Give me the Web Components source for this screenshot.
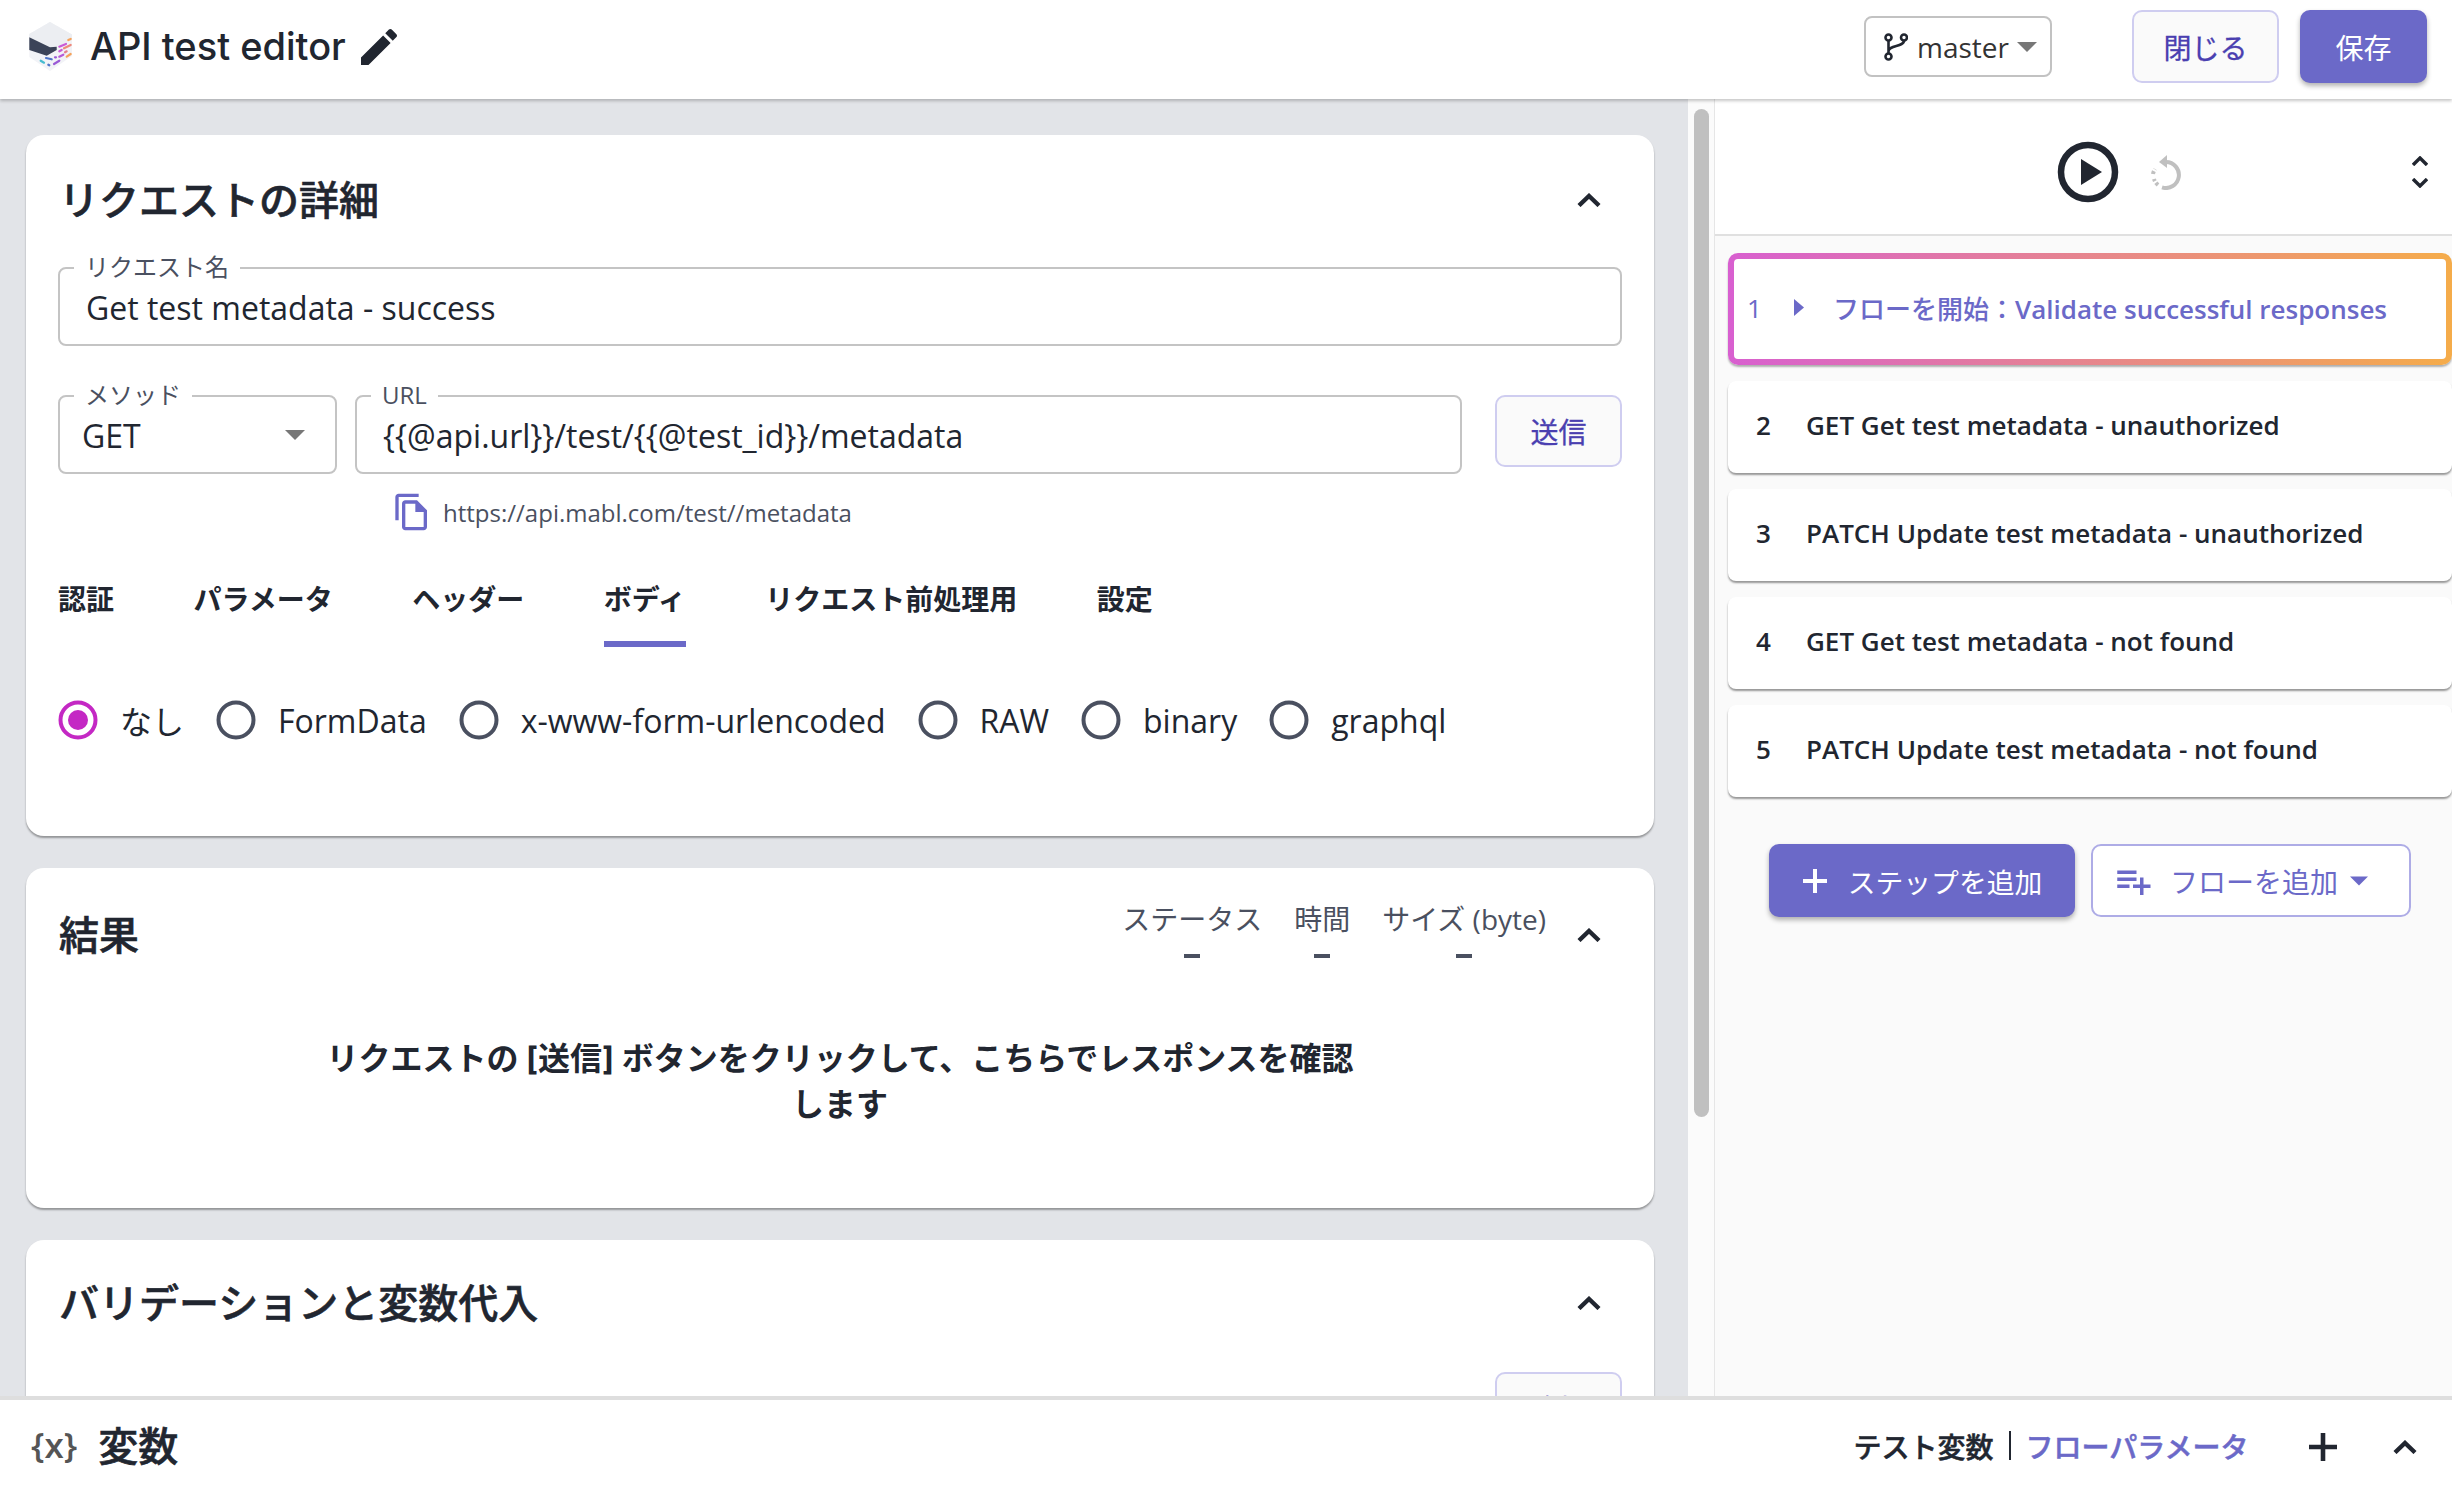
<!DOCTYPE html>
<html lang="ja">
<head>
<meta charset="utf-8">
<title>API test editor</title>
<style>
  html, body { margin: 0; height: 100%; overflow: hidden; }
  body {
    font-family: "Open Sans", "Noto Sans CJK JP", sans-serif;
    color: #212630;
    background: #e2e4e8;
  }
</style>
</head>
<body>
<app-shell>
  <app-header slot="header"></app-header>

  <section-card slot="left" heading="リクエストの詳細" head="132">
    <outlined-field label="リクエスト名" pad="26">Get test metadata - success</outlined-field>
    <form-row>
      <outlined-field label="メソッド" pad="22" caret style="width:279px">GET</outlined-field>
      <outlined-field label="URL" pad="26" style="flex:1">{{@api.url}}/test/{{@test_id}}/metadata</outlined-field>
      <ui-button kind="ghost" style="width:127px;height:72px;margin-left:15px">送信</ui-button>
    </form-row>
    <url-hint>https://api.mabl.com/test//metadata</url-hint>
    <tab-bar>
      <tab-item>認証</tab-item>
      <tab-item>パラメータ</tab-item>
      <tab-item>ヘッダー</tab-item>
      <tab-item active>ボディ</tab-item>
      <tab-item>リクエスト前処理用</tab-item>
      <tab-item>設定</tab-item>
    </tab-bar>
    <radio-group>
      <radio-option checked>なし</radio-option>
      <radio-option>FormData</radio-option>
      <radio-option>x-www-form-urlencoded</radio-option>
      <radio-option>RAW</radio-option>
      <radio-option>binary</radio-option>
      <radio-option>graphql</radio-option>
    </radio-group>
  </section-card>

  <section-card slot="left" heading="結果" head="136">
    <result-stat slot="meta" label="ステータス"></result-stat>
    <result-stat slot="meta" label="時間"></result-stat>
    <result-stat slot="meta" label="サイズ (byte)"></result-stat>
    <empty-note>リクエストの [送信] ボタンをクリックして、こちらでレスポンスを確認<br>します</empty-note>
  </section-card>

  <section-card slot="left" heading="バリデーションと変数代入" head="128">
    <div style="display:flex;justify-content:flex-end">
      <ui-button kind="ghost" style="width:127px;height:72px;margin-top:4px">追加</ui-button>
    </div>
  </section-card>

  <run-toolbar slot="right-top"></run-toolbar>

  <step-row slot="right" num="1" active><span style="font-weight:500">フローを開始：</span>Validate successful responses</step-row>
  <step-row slot="right" num="2">GET Get test metadata - unauthorized</step-row>
  <step-row slot="right" num="3">PATCH Update test metadata - unauthorized</step-row>
  <step-row slot="right" num="4">GET Get test metadata - not found</step-row>
  <step-row slot="right" num="5">PATCH Update test metadata - not found</step-row>
  <step-actions slot="right"></step-actions>

  <variables-bar slot="footer"></variables-bar>
</app-shell>

<script>
  const CHEVRON = `<svg width="24" height="14" viewBox="0 0 24 14" fill="none" stroke="#212630" stroke-width="4.4"><path d="M2 12.5 12 3l10 9.5"/></svg>`;
  const CARET = (c) => `<svg width="20" height="10" viewBox="0 0 20 10" fill="${c}"><path d="M0 0h20L10 10z"/></svg>`;

  class BaseElement extends HTMLElement {
    connectedCallback() {
      // Create a shadow root
      const shadow = this.attachShadow({ mode: "open" });
      shadow.innerHTML = this.render();
    }
  }

  class AppShell extends BaseElement {
    render() {
      return `
        <style>
          :host { display: flex; flex-direction: column; height: 100vh; overflow: hidden; }
          .main { flex: 1; min-height: 0; display: flex; overflow: hidden; }
          .left {
            width: 1688px; flex: none; box-sizing: border-box; overflow: hidden;
            padding: 36px 34px 0 26px; display: flex; flex-direction: column; gap: 32px;
          }
          .track { width: 27px; flex: none; box-sizing: border-box; padding: 10px 5px 0 6px; background: #fbfbfb; border-right: 1px solid #e6e6e6; }
          .thumb { height: 1008px; background: #c0c0c0; border-radius: 8px; }
          .right { flex: 1; min-width: 0; display: flex; flex-direction: column; background: #fafafa; }
          .steps { padding: 17px 0 0 13px; display: flex; flex-direction: column; gap: 16px; }
        </style>
        <slot name="header"></slot>
        <div class="main">
          <div class="left"><slot name="left"></slot></div>
          <div class="track"><div class="thumb"></div></div>
          <div class="right">
            <slot name="right-top"></slot>
            <div class="steps"><slot name="right"></slot></div>
          </div>
        </div>
        <slot name="footer"></slot>
      `;
    }
  }

  class AppHeader extends BaseElement {
    render() {
      return `
        <style>
          :host {
            display: flex; align-items: center; height: 99px; flex: none; box-sizing: border-box;
            background: #fff; box-shadow: 0 2px 3px rgba(0,0,0,.22); position: relative; z-index: 2;
            padding: 0 25px 6px 29px;
          }
          .title { font: 500 38px Inter, "Open Sans", sans-serif; color: #212630; margin: 0 0 2px 17px; }
          .edit { margin-left: 9px; }
          .spacer { flex: 1; }
          branch-select { margin-right: 80px; }
          ui-button { width: 147px; height: 73px; }
          ui-button[kind=primary] { width: 127px; margin-left: 21px; }
        </style>
        <svg width="44" height="49" viewBox="0 0 44 49" fill="none">
          <path d="M21 0 43 12.500V34L21 49 .3 35V12z" fill="#f2f3f7"/>
          <path d="M21 0 43 12.500V18L27.700 24.700 21 25.300.3 15.300V12z" fill="#eceef2"/>
          <path d="M.3 15.300 21 25.300l6.700-.6V28L17.700 33.700.3 28z" fill="#3b4358"/>
          <g stroke-width="2.2" stroke-linecap="round">
            <path d="M30.300 24.700 37 22" stroke="#c95ad6"/>
            <path d="M39.300 18l2.400-1" stroke="#f5a35c"/>
            <path d="M30.300 29.300l2.400-1.300" stroke="#c95ad6"/>
            <path d="M35 26.300 41.700 23" stroke="#ee8a7c"/>
            <path d="M30.300 34.700l4-2" stroke="#b45ad6"/>
            <path d="M36 30.300l1.700-1" stroke="#e4808e"/>
            <path d="M37.700 34.700l4-2.700" stroke="#f5a35c"/>
            <path d="M25 42l5.300-3.300" stroke="#9a5ad6"/>
            <path d="M26 35.300h1" stroke="#9a5ad6"/>
            <path d="M17 36l5.700 1.300" stroke="#4f74c8"/>
            <path d="M11.700 38.700 15 40.700" stroke="#45bcd0"/>
            <path d="M19.300 42.700l1 .6" stroke="#4f74c8"/>
          </g>
        </svg>
        <span class="title">API test editor</span>
        <svg class="edit" width="48" height="48" viewBox="0 0 24 24" fill="#212630"><path d="M3 17.250V21h3.750L17.810 9.940l-3.750-3.750L3 17.250zM20.710 7.040c.39-.39.39-1.020 0-1.410l-2.340-2.340c-.39-.39-1.020-.39-1.410 0l-1.830 1.830 3.750 3.750 1.830-1.830z"/></svg>
        <span class="spacer"></span>
        <branch-select>master</branch-select>
        <ui-button kind="ghost">閉じる</ui-button>
        <ui-button kind="primary">保存</ui-button>
      `;
    }
  }

  class BranchSelect extends BaseElement {
    render() {
      return `
        <style>
          :host {
            display: inline-flex; align-items: center; box-sizing: border-box; width: 188px; height: 61px;
            border: 2px solid #c2c2c2; border-radius: 8px; padding-left: 18px; font-size: 28px; color: #333;
          }
          .name { margin: 0 8px 0 9px; line-height: 1; }
        </style>
        <svg width="24" height="28" viewBox="0 0 24 28" fill="none" stroke="#212630" stroke-width="2.6">
          <circle cx="4.5" cy="4.5" r="3"/><circle cx="20" cy="4.5" r="3"/><circle cx="4.5" cy="23.5" r="3"/>
          <path d="M4.5 7.500v13M20 7.500c0 7-15.500 4-15.500 11"/>
        </svg>
        <span class="name"><slot></slot></span>
        ${CARET("#777")}
      `;
    }
  }

  class UiButton extends BaseElement {
    render() {
      const kind = this.getAttribute("kind") || "ghost";
      return `
        <style>
          :host {
            display: inline-flex; align-items: center; justify-content: center; gap: 16px; flex: none;
            box-sizing: border-box; border-radius: 10px; font-size: 28px; white-space: nowrap;
          }
          :host([kind=ghost]) { background: #fafafa; border: 2px solid #cfcdf0; color: #4a3fb0; -webkit-text-stroke: .3px currentColor; }
          :host([kind=primary]) { background: #6b69c8; color: #fff; box-shadow: 0 3px 5px rgba(0,0,0,.3); }
          :host([kind=outline]) { background: #fff; border: 2px solid #aeace6; color: #6b69c8; }
        </style>
        <slot name="icon"></slot><slot></slot><slot name="trail"></slot>
      `;
    }
  }

  class SectionCard extends BaseElement {
    render() {
      const head = this.getAttribute("head") || 132;
      return `
        <style>
          :host {
            display: block; flex: none; background: #fff; border-radius: 18px;
            box-shadow: 0 2px 2px rgba(0,0,0,.35);
          }
          .head { height: ${head}px; display: flex; align-items: center; padding: 0 53px 3px 33px; box-sizing: border-box; }
          h2 { margin: 0 0 3px; font: 500 40px "Noto Sans CJK JP", sans-serif; color: #212630; flex: 1; -webkit-text-stroke: .6px currentColor; }
          .meta { display: flex; gap: 32px; margin-right: 31px; margin-bottom: 3px; }
          .chev { display: flex; }
          .body { padding: 0 32px 0 32px; }
        </style>
        <div class="head">
          <h2>${this.getAttribute("heading")}</h2>
          <div class="meta"><slot name="meta"></slot></div>
          <span class="chev">${CHEVRON}</span>
        </div>
        <div class="body"><slot></slot></div>
      `;
    }
  }

  class OutlinedField extends BaseElement {
    render() {
      const pad = this.getAttribute("pad") || 26;
      return `
        <style>
          :host {
            display: flex; align-items: center; position: relative; box-sizing: border-box; height: 79px;
            border: 2px solid #c4c4c4; border-radius: 8px; background: #fff;
            padding: 1px 30px 0 ${pad}px; font-size: 32px; color: #212630;
          }
          .text { flex: 1; white-space: nowrap; }
          label {
            position: absolute; top: -18px; left: 14px; padding: 0 11px; background: #fff;
            font-size: 24px; line-height: 32px; color: #4a5060;
          }
        </style>
        <label>${this.getAttribute("label")}</label>
        <span class="text"><slot></slot></span>
        ${this.hasAttribute("caret") ? CARET("#777") : ""}
      `;
    }
  }

  class FormRow extends BaseElement {
    render() {
      return `
        <style>
          :host { display: flex; align-items: flex-start; gap: 18px; margin-top: 49px; }
        </style>
        <slot></slot>
      `;
    }
  }

  class UrlHint extends BaseElement {
    render() {
      return `
        <style>
          :host { display: flex; align-items: center; gap: 11px; height: 40px; margin-top: 18px; padding-left: 334px; font-size: 24px; color: #4a5060; }
        </style>
        <svg width="40" height="40" viewBox="0 0 24 24" fill="#6b69c8"><path d="M16 1H4c-1.100 0-2 .9-2 2v14h2V3h12V1zm-1 4H8c-1.100 0-1.990.9-1.990 2L6 21c0 1.100.89 2 1.990 2H19c1.100 0 2-.9 2-2V11l-6-6zM8 21V7h6v5h5v9H8z"/></svg>
        <span><slot></slot></span>
      `;
    }
  }

  class TabBar extends BaseElement {
    render() {
      return `
        <style>
          :host { display: flex; gap: 79.5px; margin-top: 46px; }
        </style>
        <slot></slot>
      `;
    }
  }

  class TabItem extends BaseElement {
    render() {
      return `
        <style>
          :host {
            display: block; box-sizing: border-box; height: 69px;
            font: 700 28px/40px "Noto Sans CJK JP", sans-serif; color: #212630;
          }
          :host([active]) { border-bottom: 6px solid #6b69c8; }
        </style>
        <slot></slot>
      `;
    }
  }

  class RadioGroup extends BaseElement {
    render() {
      return `
        <style>
          :host { display: flex; gap: 32px; margin-top: 53px; padding-bottom: 96px; }
        </style>
        <slot></slot>
      `;
    }
  }

  class RadioOption extends BaseElement {
    render() {
      const on = this.hasAttribute("checked");
      const color = on ? "#c428c4" : "#4a5060";
      return `
        <style>
          :host { display: flex; align-items: center; gap: 22px; height: 40px; font-size: 32px; color: #212630; white-space: nowrap; }
        </style>
        <svg width="40" height="40" viewBox="0 0 40 40">
          <circle cx="20" cy="20" r="17.5" fill="none" stroke="${color}" stroke-width="4"/>
          ${on ? `<circle cx="20" cy="20" r="10" fill="${color}"/>` : ""}
        </svg>
        <span><slot></slot></span>
      `;
    }
  }

  class ResultStat extends BaseElement {
    render() {
      return `
        <style>
          :host { display: flex; flex-direction: column; align-items: center; font-size: 28px; color: #4a5060; line-height: 36px; }
          .dash { width: 16px; height: 4px; background: #4a5060; margin-top: 17px; margin-bottom: 7px; }
        </style>
        <span>${this.getAttribute("label")}</span>
        <span class="dash"></span>
      `;
    }
  }

  class EmptyNote extends BaseElement {
    render() {
      return `
        <style>
          :host {
            display: block; text-align: center; padding: 32px 0 80px;
            font: 700 32px/46px Inter, "Noto Sans CJK JP", sans-serif; color: #212630;
          }
        </style>
        <slot></slot>
      `;
    }
  }

  class RunToolbar extends BaseElement {
    render() {
      return `
        <style>
          :host {
            display: flex; align-items: center; justify-content: center; height: 137px; box-sizing: border-box;
            background: #fff; border-bottom: 2px solid #e0e0e0; position: relative;
            padding: 10px 0 0 72px;
          }
          .updown { position: absolute; right: 24px; top: 57px; display: flex; flex-direction: column; gap: 12px; }
          .updown svg { display: block; }
          .buttons { display: flex; align-items: center; gap: 31px; }
        </style>
        <span class="buttons">
          <svg width="62" height="62" viewBox="0 0 62 62">
            <circle cx="31" cy="31" r="27" fill="none" stroke="#212630" stroke-width="6.5"/>
            <path d="M24 18 45 31 24 44z" fill="#212630"/>
          </svg>
          <svg width="32" height="36" viewBox="0 0 32 36" fill="none" stroke="#c0c0c0" stroke-width="4">
            <path d="M16 8a13 13 0 1 1-4 25.400" />
            <path d="M8 31a13 13 0 0 1-4-6M3 20a13 13 0 0 1 2-5" stroke-dasharray="3 2"/>
            <path d="M17 1 9 8l8 6z" fill="#c0c0c0" stroke="none"/>
          </svg>
        </span>
        <span class="updown">
          <svg width="16" height="10" viewBox="0 0 16 10" fill="none" stroke="#212630" stroke-width="3.4"><path d="M1 9 8 2l7 7"/></svg>
          <svg width="16" height="10" viewBox="0 0 16 10" fill="none" stroke="#212630" stroke-width="3.4"><path d="M1 1l7 7 7-7"/></svg>
        </span>
      `;
    }
  }

  class StepRow extends BaseElement {
    render() {
      const active = this.hasAttribute("active");
      return `
        <style>
          :host {
            display: flex; align-items: center; box-sizing: border-box; height: 92px; background: #fff;
            border-radius: 8px; box-shadow: 0 2px 2px rgba(0,0,0,.4); padding-bottom: 5px;
            font-size: 26px; font-weight: 600; color: #212630; white-space: nowrap;
          }
          :host([active]) {
            height: 112px; border: 6px solid transparent; padding-bottom: 3px; border-radius: 10px;
            box-shadow: 0 2px 2px rgba(0,0,0,.3);
            background: linear-gradient(#fff, #fff) padding-box, linear-gradient(90deg, #d85fd0, #f5ac4a) border-box;
            color: #6b69c8;
          }
          .num { width: 78px; padding-left: 28px; box-sizing: border-box; flex: none; }
          :host([active]) .num { width: 99px; padding-left: 13px; display: flex; align-items: center; gap: 32px; font-weight: 500; }
        </style>
        <span class="num">${this.getAttribute("num")}${active ? `<svg width="10" height="17" viewBox="0 0 10 17" fill="#6b69c8"><path d="M0 0l10 8.500-10 8.500z"/></svg>` : ""}</span>
        <span><slot></slot></span>
      `;
    }
  }

  class StepActions extends BaseElement {
    render() {
      return `
        <style>
          :host { display: flex; gap: 16px; padding: 31px 0 0 41px; }
          .add { width: 306px; height: 73px; gap: 20px; font-size: 27.8px; }
          .flow { width: 320px; height: 73px; justify-content: flex-start; padding-left: 19px; font-size: 28px; }
          svg { display: block; }
          .trail { margin-left: -4px; }
        </style>
        <ui-button class="add" kind="primary">
          <svg slot="icon" width="26" height="26" viewBox="0 0 26 26" stroke="#fff" stroke-width="4"><path d="M13 1v24M1 13h24"/></svg>
          ステップを追加
        </ui-button>
        <ui-button class="flow" kind="outline">
          <svg slot="icon" width="42" height="42" viewBox="0 0 24 24" fill="#6b69c8"><path d="M14 10H3v2h11v-2zm0-4H3v2h11V6zm4 8v-4h-2v4h-4v2h4v4h2v-4h4v-2h-4zM3 16h7v-2H3v2z"/></svg>
          フローを追加
          <svg class="trail" slot="trail" width="18" height="10" viewBox="0 0 20 10" fill="#6b69c8"><path d="M0 0h20L10 10z"/></svg>
        </ui-button>
      `;
    }
  }

  class VariablesBar extends BaseElement {
    render() {
      return `
        <style>
          :host {
            display: flex; align-items: center; flex: none; box-sizing: border-box; height: 90px;
            background: #fff; border-top: 4px solid #dedede; padding: 8px 35px 0 31px; position: relative; z-index: 2;
          }
          .x { font-size: 35px; font-weight: 600; color: #555; line-height: 1; margin-bottom: 5px; }
          h3 { margin: 0 0 6px 21px; font: 500 40px "Noto Sans CJK JP", sans-serif; color: #212630; flex: 1; -webkit-text-stroke: .6px currentColor; }
          .tabs { font: 500 28px "Noto Sans CJK JP", sans-serif; display: flex; align-items: center; gap: 15px; margin-bottom: 3px; -webkit-text-stroke: .5px currentColor; }
          .sep { width: 2px; height: 29px; background: #212630; }
          .link { color: #6b69c8; }
          .plus { margin-left: 60px; display: block; }
          .up { margin-left: 56.5px; display: flex; }
        </style>
        <span class="x">{x}</span>
        <h3>変数</h3>
        <span class="tabs"><span>テスト変数</span><span class="sep"></span><span class="link">フローパラメータ</span></span>
        <svg class="plus" width="28" height="28" viewBox="0 0 28 28" stroke="#212630" stroke-width="4.6"><path d="M14 0v28M0 14h28"/></svg>
        <span class="up">${CHEVRON}</span>
      `;
    }
  }

  customElements.define("app-shell", AppShell);
  customElements.define("app-header", AppHeader);
  customElements.define("branch-select", BranchSelect);
  customElements.define("ui-button", UiButton);
  customElements.define("section-card", SectionCard);
  customElements.define("outlined-field", OutlinedField);
  customElements.define("form-row", FormRow);
  customElements.define("url-hint", UrlHint);
  customElements.define("tab-bar", TabBar);
  customElements.define("tab-item", TabItem);
  customElements.define("radio-group", RadioGroup);
  customElements.define("radio-option", RadioOption);
  customElements.define("result-stat", ResultStat);
  customElements.define("empty-note", EmptyNote);
  customElements.define("run-toolbar", RunToolbar);
  customElements.define("step-row", StepRow);
  customElements.define("step-actions", StepActions);
  customElements.define("variables-bar", VariablesBar);
</script>
</body>
</html>
